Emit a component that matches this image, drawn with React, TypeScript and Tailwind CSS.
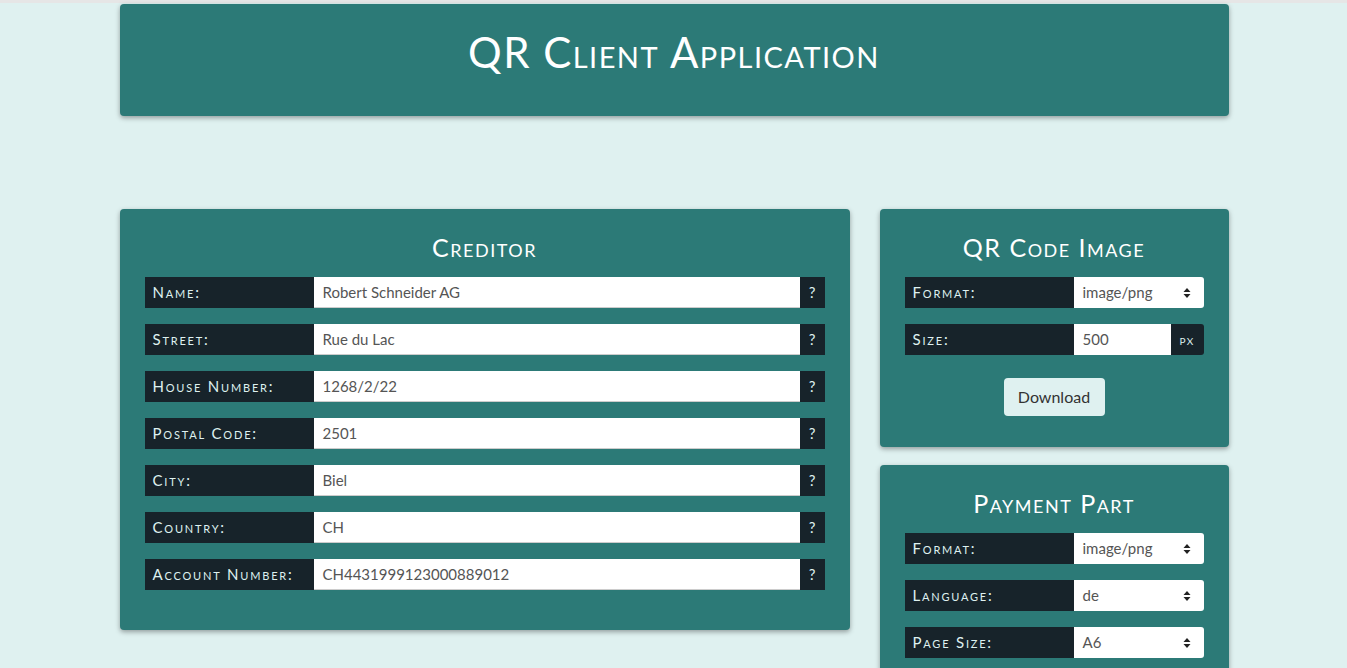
import React from "react";

const creditorFields = [
  { label: "Name:", value: "Robert Schneider AG" },
  { label: "Street:", value: "Rue du Lac" },
  { label: "House Number:", value: "1268/2/22" },
  { label: "Postal Code:", value: "2501" },
  { label: "City:", value: "Biel" },
  { label: "Country:", value: "CH" },
  { label: "Account Number:", value: "CH4431999123000889012" },
];

function Caret() {
  return (
    <svg width="8" height="12" viewBox="0 0 8 12" className="shrink-0">
      <path d="M4 1 L7.5 5 H0.5 Z" fill="#222" />
      <path d="M4 11 L7.5 7 H0.5 Z" fill="#222" />
    </svg>
  );
}

function Label({ children }: { children: React.ReactNode }) {
  return (
    <div className="w-[169px] shrink-0 bg-[#17232a] text-[#dff1f0] text-[15px] tracking-[0.12em] [font-variant:small-caps] pl-2 flex items-center">
      {children}
    </div>
  );
}

function FieldRow({ label, value }: { label: string; value: string }) {
  return (
    <div className="flex h-[31px]">
      <Label>{label}</Label>
      <div className="flex-1 bg-white border-b border-[#ccc] text-[#555] text-[15px] pl-[9px] flex items-center">
        {value}
      </div>
      <div className="w-[25px] bg-[#17232a] text-[#dff1f0] text-[15px] flex items-center justify-center">
        ?
      </div>
    </div>
  );
}

function SelectRow({ label, value }: { label: string; value: string }) {
  return (
    <div className="flex h-[31px]">
      <Label>{label}</Label>
      <div className="flex-1 bg-white rounded-r-[3px] text-[#555] text-[15px] pl-[9px] pr-[13px] flex items-center justify-between">
        <span>{value}</span>
        <Caret />
      </div>
    </div>
  );
}

function CardTitle({ children }: { children: React.ReactNode }) {
  return (
    <h2 className="text-center text-white text-[25px] tracking-[0.06em] [font-variant:small-caps] leading-none mb-[17px]">
      {children}
    </h2>
  );
}

export default function App() {
  return (
    <div
      className="min-h-screen bg-[#dff1f0] border-t-[3px] border-[#e6e6e6]"
      style={{ fontFamily: "Lato, 'Open Sans', sans-serif" }}
    >
      <div className="w-[1110px] mx-auto pt-px pl-px">
        <header className="bg-[#2c7a77] rounded-[4px] shadow-[0_2px_5px_rgba(0,0,0,0.35)] h-[112px] flex items-center justify-center pb-[16px]">
          <h1 className="text-white text-[42px] tracking-[0.035em] [font-variant:small-caps] leading-none">
            QR Client Application
          </h1>
        </header>

        <div className="flex gap-[30px] mt-[93px] items-start">
          <section className="w-[730px] bg-[#2c7a77] rounded-[4px] shadow-[0_2px_5px_rgba(0,0,0,0.35)] px-[25px] pt-[26px] pb-[40px]">
            <CardTitle>Creditor</CardTitle>
            <div className="flex flex-col gap-4">
              {creditorFields.map((f) => (
                <FieldRow key={f.label} label={f.label} value={f.value} />
              ))}
            </div>
          </section>

          <div className="flex-1 flex flex-col gap-[18px]">
            <section className="bg-[#2c7a77] rounded-[4px] shadow-[0_2px_5px_rgba(0,0,0,0.35)] px-[25px] pt-[26px] pb-[31px]">
              <CardTitle>QR Code Image</CardTitle>
              <div className="flex flex-col gap-4">
                <SelectRow label="Format:" value="image/png" />
                <div className="flex h-[31px]">
                  <Label>Size:</Label>
                  <div className="w-[97px] bg-white text-[#555] text-[15px] pl-[9px] flex items-center">
                    500
                  </div>
                  <div className="flex-1 bg-[#17232a] rounded-r-[3px] text-[#dff1f0] text-[14px] tracking-[0.1em] [font-variant:small-caps] flex items-center justify-center">
                    px
                  </div>
                </div>
              </div>
              <div className="flex justify-center mt-[23px]">
                <button className="bg-[#dff1f0] text-[#333] text-[16px] rounded-[4px] w-[101px] h-[38px]">
                  Download
                </button>
              </div>
            </section>

            <section className="bg-[#2c7a77] rounded-[4px] shadow-[0_2px_5px_rgba(0,0,0,0.35)] px-[25px] pt-[26px] pb-[31px]">
              <CardTitle>Payment Part</CardTitle>
              <div className="flex flex-col gap-4">
                <SelectRow label="Format:" value="image/png" />
                <SelectRow label="Language:" value="de" />
                <SelectRow label="Page Size:" value="A6" />
              </div>
            </section>
          </div>
        </div>
      </div>
    </div>
  );
}
